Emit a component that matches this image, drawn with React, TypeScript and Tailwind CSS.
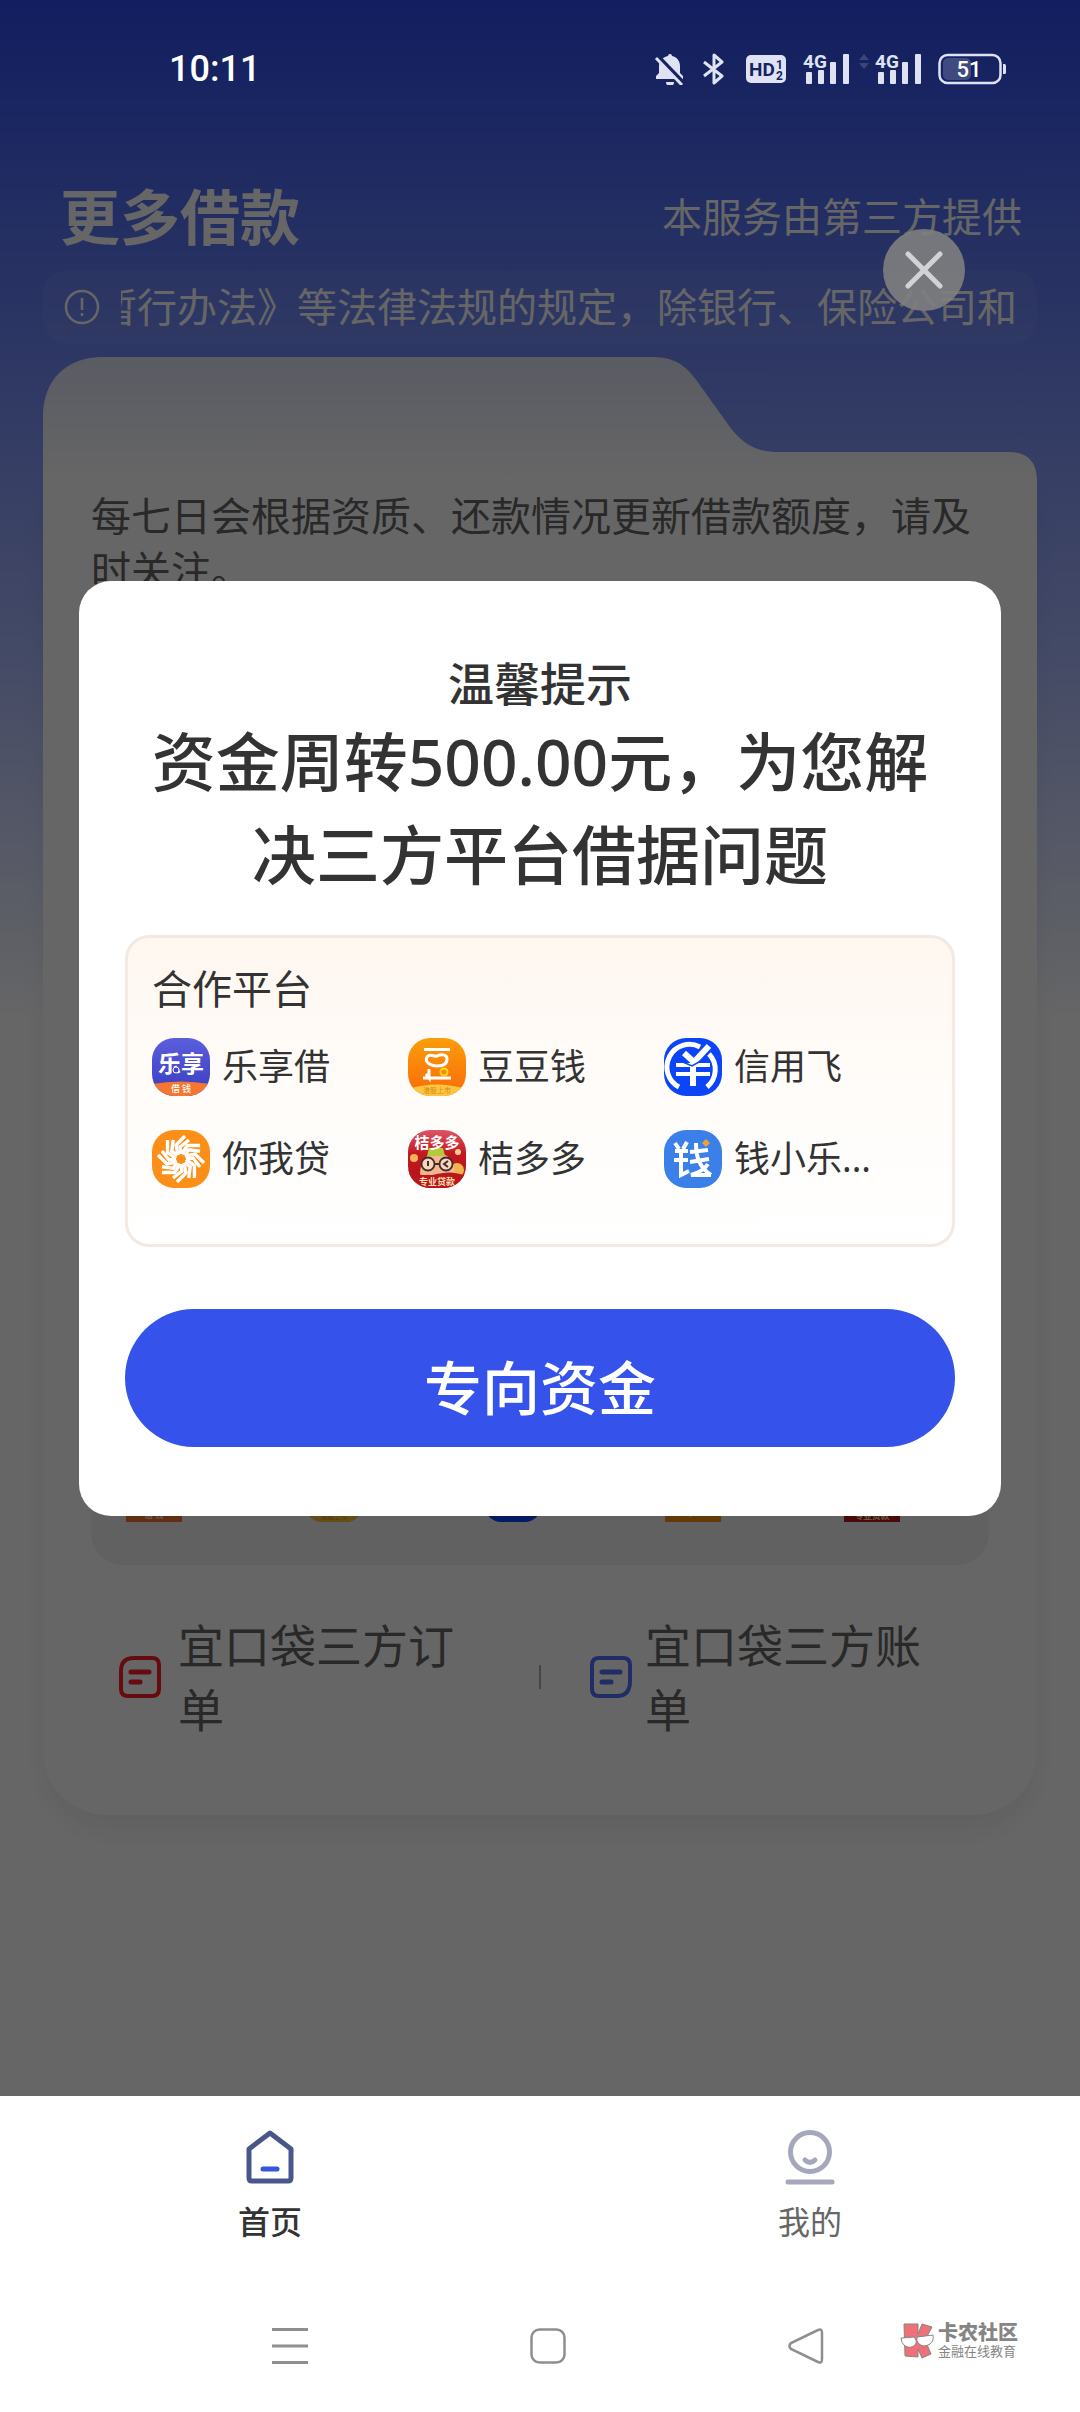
import { useState } from 'react';
import type { ReactNode } from 'react';

const FONT = 'font-["Noto_Sans","Noto_Sans_CJK_SC",sans-serif]';

function StatusBar() {
  return (
    <div className="relative z-20 flex h-[138px] shrink-0 items-center justify-between pl-[169px] pr-[74px]">
      <span className="font-['Roboto',sans-serif] text-4xl font-medium text-white">10:11</span>
      <div className="flex items-center text-[#dfe2f2]">
        {/* Muted bell */}
        <svg className="mr-4 h-8 w-8" viewBox="0 0 32 32" fill="currentColor">
          <path d="M14 3a2 2 0 0 1 4 0c5 1 8 5 8 10v7l3 3v3H2v-3l3-3v-7c0-5 4-9 9-10z" />
          <path d="M12 29h8a4 4 0 0 1-8 0z" />
          <path d="M3 3L31 32" stroke="#162362" strokeWidth="5" />
          <path d="M2 5L28 32" stroke="currentColor" strokeWidth="3" />
        </svg>
        {/* Bluetooth */}
        <svg className="mr-5 h-8 w-6" viewBox="0 0 24 32" fill="none" stroke="currentColor" strokeWidth="3" strokeLinejoin="round">
          <path d="M2 9l18 14-8 7V2l8 7L2 23" />
        </svg>
        {/* Dual HD */}
        <svg className="mr-4 h-8 w-10" viewBox="0 0 40 32">
          <rect y="2" width="40" height="28" rx="5" fill="currentColor" />
          <g fill="#162362" fontFamily="Roboto, sans-serif" fontWeight="700">
            <text x="3" y="23" fontSize="19">HD</text>
            <text x="30" y="16" fontSize="12">1</text>
            <text x="30" y="27" fontSize="12">2</text>
          </g>
        </svg>
        <Signal />
        <svg className="ml-2 mr-1 h-8 w-3" viewBox="0 0 12 32" fill="#3c4675">
          <path d="M6 1l5 6H1zM6 16l5-6H1z" />
        </svg>
        <Signal />
        {/* Battery */}
        <svg className="ml-4 h-8 w-[68px]" viewBox="0 0 68 32">
          <rect x="1.500" y="2" width="61" height="28" rx="8" fill="none" stroke="currentColor" strokeWidth="2.500" />
          <rect x="5" y="5" width="28" height="22" rx="5" fill="#3f4a80" />
          <path d="M65 11h1.500a1.500 1.500 0 0 1 1.500 1.500v7a1.500 1.500 0 0 1-1.500 1.500H65z" fill="currentColor" />
          <text x="31" y="24" fontSize="22" fontFamily="Roboto, sans-serif" fontWeight="500" fill="#fff" textAnchor="middle">51</text>
        </svg>
      </div>
    </div>
  );
}

function Signal() {
  return (
    <svg className="h-10 w-[48px] overflow-visible" viewBox="0 0 48 40" fill="currentColor">
      <text x="1" y="19" fontSize="19" fontFamily="Roboto, sans-serif" fontWeight="700">4G</text>
      <rect x="4" y="23" width="6" height="12" rx="1" />
      <rect x="16" y="21" width="6" height="14" rx="1" />
      <rect x="28" y="13" width="6" height="22" rx="1" />
      <rect x="41" y="5" width="6" height="30" rx="1" />
    </svg>
  );
}

function LexiangLogo() {
  return (
    <svg className="h-full w-full" viewBox="0 0 58 58">
      <defs>
        <linearGradient id="lexiang" x1="0" y1="0" x2="0" y2="1">
          <stop offset="0" stopColor="#5b5fdd" />
          <stop offset="1" stopColor="#383cc0" />
        </linearGradient>
      </defs>
      <rect width="58" height="58" fill="url(#lexiang)" />
      <path d="M0 46Q29 41 58 46V58H0z" fill="#f6762f" />
      <g fill="#fff" textAnchor="middle" fontFamily="Noto Sans CJK SC, sans-serif">
        <text x="29" y="34" fontSize="23" fontWeight="700">乐享</text>
        <text x="29" y="54" fontSize="9" fontWeight="500">借 钱</text>
      </g>
      <circle cx="24" cy="32" r="3" fill="#4347cb" stroke="#fff" />
    </svg>
  );
}

function DoudouLogo() {
  return (
    <svg className="h-full w-full" viewBox="0 0 58 58">
      <defs>
        <linearGradient id="doudou" x1="0" y1="0" x2="0" y2="1">
          <stop offset="0" stopColor="#fb9d0a" />
          <stop offset="1" stopColor="#fb6a09" />
        </linearGradient>
      </defs>
      <rect width="58" height="58" fill="url(#doudou)" />
      <path d="M0 51Q29 42 58 51V58H0z" fill="#fbc63e" />
      <g fill="none" stroke="#fff" strokeWidth="3">
        <path d="M16 11.500H42" />
        <path d="M19 19c3-4 7 0 10-1 4-2 10-2 10 3 0 6-5 7-10 7s-13-3-10-9z" />
        <path d="M15 40H43M21 31v9l-3-4" />
      </g>
      <circle cx="36" cy="34" r="3.500" fill="#fb8a09" stroke="#fbd92c" strokeWidth="2" />
      <text x="29" y="55" fontSize="7" fill="#d9861f" textAnchor="middle" fontFamily="Noto Sans CJK SC, sans-serif">港股上市</text>
    </svg>
  );
}

function XinyongfeiLogo() {
  return (
    <svg className="h-full w-full" viewBox="0 0 58 58">
      <rect width="58" height="58" fill="#0b45f7" />
      <g fill="none" stroke="#fff">
        <path d="M15 49A22.500 22.500 0 0 1 36 9" strokeWidth="5" />
        <path d="M45 16A22.500 22.500 0 0 1 43 49" strokeWidth="5" />
        <path d="M20 15L30 24L45 8" strokeWidth="6" />
        <path d="M12 27H46M12 36H46" strokeWidth="4" />
        <path d="M29 24V48" strokeWidth="6" />
      </g>
      <path d="M14 22L28 28L42 20" stroke="#0b45f7" strokeWidth="1.500" fill="none" />
    </svg>
  );
}

function NiwodaiLogo() {
  return (
    <svg className="h-full w-full" viewBox="0 0 58 58">
      <rect width="58" height="58" fill="#fb8f17" />
      <g fill="none" stroke="#fff" strokeWidth="3.400">
        {[0, 45, 90, 135, 180, 225, 270, 315].map((angle) => (
          <g key={angle} transform={`rotate(${angle} 29 29)`}>
            <path d="M26 25L24 15L33 6" />
            <path d="M29 24L28 17L37 10" />
          </g>
        ))}
      </g>
    </svg>
  );
}

function JieduoduoLogo() {
  return (
    <svg className="h-full w-full" viewBox="0 0 58 58">
      <defs>
        <linearGradient id="jieduoduo" x1="0" y1="0" x2="0" y2="1">
          <stop offset="0" stopColor="#dc5666" />
          <stop offset="0.400" stopColor="#c3191f" />
          <stop offset="1" stopColor="#ad1217" />
        </linearGradient>
      </defs>
      <rect width="58" height="58" fill="url(#jieduoduo)" />
      <circle cx="6" cy="28" r="4" fill="#f6b25c" />
      <circle cx="49" cy="40" r="7" fill="#f3b44e" />
      <circle cx="50" cy="22" r="3" fill="#f7cf96" />
      <path d="M12 45c0-14 6-22 17-22s18 8 18 22z" fill="#f5b68f" />
      <path d="M21 18h14l2 8H19z" fill="#b4c93b" />
      <path d="M0 40q14 8 29 4t29 2v12H0z" fill="#b8171b" />
      <g fill="#f8d5bd" stroke="#402c2a" strokeWidth="1.800">
        <circle cx="20" cy="34" r="6.500" />
        <circle cx="38" cy="34" r="6.500" />
      </g>
      <path d="M27 34h4M20 31v5M40 31l-4 3 4 3" stroke="#402c2a" strokeWidth="2" fill="none" />
      <g textAnchor="middle" fontFamily="Noto Sans CJK SC, sans-serif" fontWeight="700">
        <text x="29" y="18" fontSize="15" fill="#fff">桔多多</text>
        <text x="29" y="55" fontSize="9" fill="#fbdcae">专业贷款</text>
      </g>
    </svg>
  );
}

function QianxiaoleLogo() {
  return (
    <svg className="h-full w-full" viewBox="0 0 58 58">
      <rect width="58" height="58" fill="#3b7fe8" />
      <g fill="none" stroke="#fff" strokeWidth="4">
        <path d="M11 13l4 6M23 12l-4 7M11 21h13M10 30h14M17 20v25l8-4" />
        <path d="M26 22l18-2M26 32l19-3M32 13c0 14 3 24 15 32M44 34c-4 6-10 9-17 11h20" />
      </g>
      <path d="M42 9l4 4-4 4-4-4z" fill="#eba32c" />
    </svg>
  );
}

const PLATFORMS: { name: string; logo: ReactNode; rounded?: boolean }[] = [
  { name: '乐享借', logo: <LexiangLogo /> },
  { name: '豆豆钱', logo: <DoudouLogo />, rounded: true },
  { name: '信用飞', logo: <XinyongfeiLogo />, rounded: true },
  { name: '你我贷', logo: <NiwodaiLogo /> },
  { name: '桔多多', logo: <JieduoduoLogo /> },
  { name: '钱小乐...', logo: <QianxiaoleLogo /> },
];

function LoanCard() {
  return (
    <section className="mx-[43px] mt-[13px] text-[#666]">
      {/* Folder tab */}
      <svg className="block h-[124px] w-full" viewBox="0 0 994 124" preserveAspectRatio="none">
        <defs>
          <linearGradient id="tab" x1="0" y1="0" x2="0" y2="1">
            <stop offset="0" stopColor="#e0e4fa" />
            <stop offset="1" stopColor="#ffffff" />
          </linearGradient>
        </defs>
        <path
          d="M0 124V60C0 22 24 0 60 0H608C632 0 642 8 654 24L684 66C698 86 712 95 735 95H966C984 95 994 105 994 123V124Z"
          fill="url(#tab)"
        />
      </svg>
      <div className="rounded-b-[64px] bg-white px-12 pb-[74px] pt-2 shadow-[0_16px_24px_rgba(0,0,0,0.06)]">
        <p className="text-[40px] leading-[54px]">每七日会根据资质、还款情况更新借款额度，请及时关注。</p>
        <div className="mt-4 flex min-h-[952px] flex-col justify-end rounded-[32px] bg-[#f3f3f3] pb-[43px]">
          <ul className="grid grid-cols-5">
            {PLATFORMS.slice(0, 5).map((p) => (
              <li key={p.name} className="flex items-center gap-2 pl-[35px]">
                <span className={`h-14 w-14 shrink-0 overflow-hidden ${p.rounded ? 'rounded-2xl' : ''}`}>{p.logo}</span>
                <span className="whitespace-nowrap text-2xl leading-6">{p.name}</span>
              </li>
            ))}
          </ul>
        </div>
        <div className="-mx-12 mt-12 grid grid-cols-[1fr_2px_1fr] items-center text-[46px] leading-[64px]">
          <a href="#orders" className="flex items-center gap-4 pl-[75px]">
            <svg className="h-[44px] w-[44px] shrink-0" viewBox="0 0 44 44" fill="none" stroke="#ff2028" strokeWidth="4">
              <path d="M16 3H34Q41 3 41 10V34Q41 41 34 41H10Q3 41 3 34V16Q3 3 16 3Z" />
              <path d="M13 17H31M13 27H22" strokeWidth="5" strokeLinecap="round" />
            </svg>
            <span className="max-w-[300px]">宜口袋三方订单</span>
          </a>
          <span className="h-6 w-0.5 bg-[#b0b0b0]" />
          <a href="#bills" className="flex items-center gap-3 pl-12">
            <svg className="h-[44px] w-[44px] shrink-0" viewBox="0 0 44 44" fill="none" stroke="#5470ff" strokeWidth="4">
              <path d="M10 3H34Q41 3 41 10V26Q41 41 28 41H10Q3 41 3 34V10Q3 3 10 3Z" />
              <path d="M13 17H31M13 27H22" strokeWidth="5" strokeLinecap="round" />
            </svg>
            <span className="max-w-[300px]">宜口袋三方账单</span>
          </a>
        </div>
      </div>
    </section>
  );
}

function FundsDialog({ onClose }: { onClose: () => void }) {
  return (
    <div className="absolute inset-0 z-10 flex items-center justify-center bg-black/60 px-[79px]">
      <div role="dialog" aria-labelledby="dialog-title" className="relative w-full rounded-[32px] bg-white px-[46px] pb-[69px] pt-[70px] text-[#333]">
        {/* Close button */}
        <button
          type="button"
          aria-label="关闭"
          onClick={onClose}
          className="absolute -top-[352px] right-[36px] flex h-[82px] w-[82px] items-center justify-center rounded-full bg-[#808080]/90"
        >
          <svg className="h-10 w-10" viewBox="0 0 40 40" stroke="#d2d2d4" strokeWidth="5" strokeLinecap="round">
            <path d="M4 4L36 36M36 4L4 36" />
          </svg>
        </button>

        <h2 id="dialog-title" className="text-center text-[46px] font-medium leading-[64px]">温馨提示</h2>
        <p className="text-center text-[64px] font-medium leading-[93px]">资金周转500.00元，为您解决三方平台借据问题</p>

        <div className="mt-[34px] min-h-[312px] rounded-3xl border-[3px] border-[#f2e9e3] bg-linear-to-b from-[#fff7f0] via-[#fffcf9] to-white pl-6 pr-8 pt-6">
          <h3 className="text-[40px] leading-[54px]">合作平台</h3>
          <ul className="mt-[22px] grid grid-cols-3 gap-y-[34px]">
            {PLATFORMS.map((p) => (
              <li key={p.name} className="flex items-center gap-3">
                <span className="h-[58px] w-[58px] shrink-0 overflow-hidden rounded-[22px]">{p.logo}</span>
                <span className="whitespace-nowrap text-4xl leading-[54px]">{p.name}</span>
              </li>
            ))}
          </ul>
        </div>

        <button type="button" className="mt-[62px] h-[138px] w-full rounded-full bg-[#3552ea] pt-5 text-[58px] font-medium leading-[64px] text-white">
          专向资金
        </button>
      </div>
    </div>
  );
}

function TabBar() {
  return (
    <nav className="grid grid-cols-2 bg-white pt-8 text-[32px] leading-10">
      <a href="#home" className="flex flex-col items-center gap-4 font-medium text-[#333]">
        <svg className="h-[58px] w-[52px]" viewBox="0 0 52 58" fill="none" strokeLinecap="round" strokeLinejoin="round">
          <path d="M26 5L47 21V50Q47 53 44 53H8Q5 53 5 50V21Z" stroke="#485788" strokeWidth="5" />
          <path d="M19 41H33" stroke="#3556da" strokeWidth="5" />
        </svg>
        首页
      </a>
      <a href="#mine" className="flex flex-col items-center gap-4 text-[#666]">
        <svg className="h-[58px] w-[52px]" viewBox="0 0 52 58" fill="none" stroke="#a5a8bd" strokeWidth="5" strokeLinecap="round">
          <circle cx="26" cy="24" r="19.500" />
          <path d="M21 32Q26 37 31 32" />
          <path d="M4 54H48" />
        </svg>
        我的
      </a>
    </nav>
  );
}

function SystemBar() {
  return (
    <footer className="relative mt-auto flex h-[132px] items-center justify-center gap-[222px] bg-white pl-4">
      <button type="button" aria-label="菜单">
        <svg className="block h-9 w-9" viewBox="0 0 36 36" stroke="#8f8f8f" strokeWidth="3">
          <path d="M0 1.500H36M0 18H36M0 34.500H36" />
        </svg>
      </button>
      <button type="button" aria-label="主屏幕">
        <svg className="block h-9 w-9" viewBox="0 0 36 36" fill="none" stroke="#8f8f8f" strokeWidth="2.500">
          <rect x="1.500" y="1.500" width="33" height="33" rx="8" />
        </svg>
      </button>
      <button type="button" aria-label="返回">
        <svg className="block h-9 w-9" viewBox="0 0 36 36" fill="none" stroke="#8f8f8f" strokeWidth="2.500">
          <path d="M30 2L3 15Q0 18 3 21L30 34Q34 36 34 31V5Q34 0 30 2Z" />
        </svg>
      </button>

      {/* Community badge */}
      <div className="absolute right-[62px] top-[43px] flex items-center gap-1 text-[#858585]">
        <svg className="h-9 w-[34px]" viewBox="0 0 34 36" stroke="#858585">
          <path d="M4 1H18V11L22 1L32 4L25 17L31 31L22 35L18 26V34L5 33Z" fill="#ee7078" />
          <path d="M1 15L14 14Q18 18 15 22Q11 26 5 23Q1 20 1 15Z" fill="#fff" />
          <path d="M17 14L33 12Q34 18 30 21Q24 25 19 21Q16 18 17 14Z" fill="#fff" />
        </svg>
        <div>
          <div className="text-xl font-black leading-5">卡农社区</div>
          <div className="text-[13px] leading-4">金融在线教育</div>
        </div>
      </div>
    </footer>
  );
}

export default function App() {
  const [open, setOpen] = useState(true);

  return (
    <div className={`flex min-h-screen flex-col bg-white ${FONT}`}>
      <main className="relative flex flex-col bg-[linear-gradient(180deg,#2d4cf0_0px,#728af8_350px,#a9b9ff_650px,#ffffff_1020px)] pb-[281px]">
        <StatusBar />
        <header className="flex h-[132px] items-center justify-between pl-[60px] pr-[58px] pt-[26px] text-white">
          <h1 className="text-[60px] font-bold leading-[80px]">更多借款</h1>
          <p className="text-[40px] leading-[54px]">本服务由第三方提供</p>
        </header>
        <div className="mx-[43px] flex h-[74px] items-center gap-[21px] rounded-3xl bg-white/5 pl-[21px] pr-5 text-white">
          <svg className="h-9 w-9 shrink-0" viewBox="0 0 36 36" fill="none" stroke="currentColor" strokeWidth="2.500">
            <circle cx="18" cy="18" r="16" />
            <path d="M18 9V21M18 24V27" />
          </svg>
          <div className="flex flex-1 justify-end overflow-hidden">
            <p className="whitespace-nowrap text-[40px] leading-[54px]">暂行办法》等法律法规的规定，除银行、保险公司和</p>
          </div>
        </div>
        <LoanCard />
        {open && <FundsDialog onClose={() => setOpen(false)} />}
      </main>
      <TabBar />
      <SystemBar />
    </div>
  );
}
